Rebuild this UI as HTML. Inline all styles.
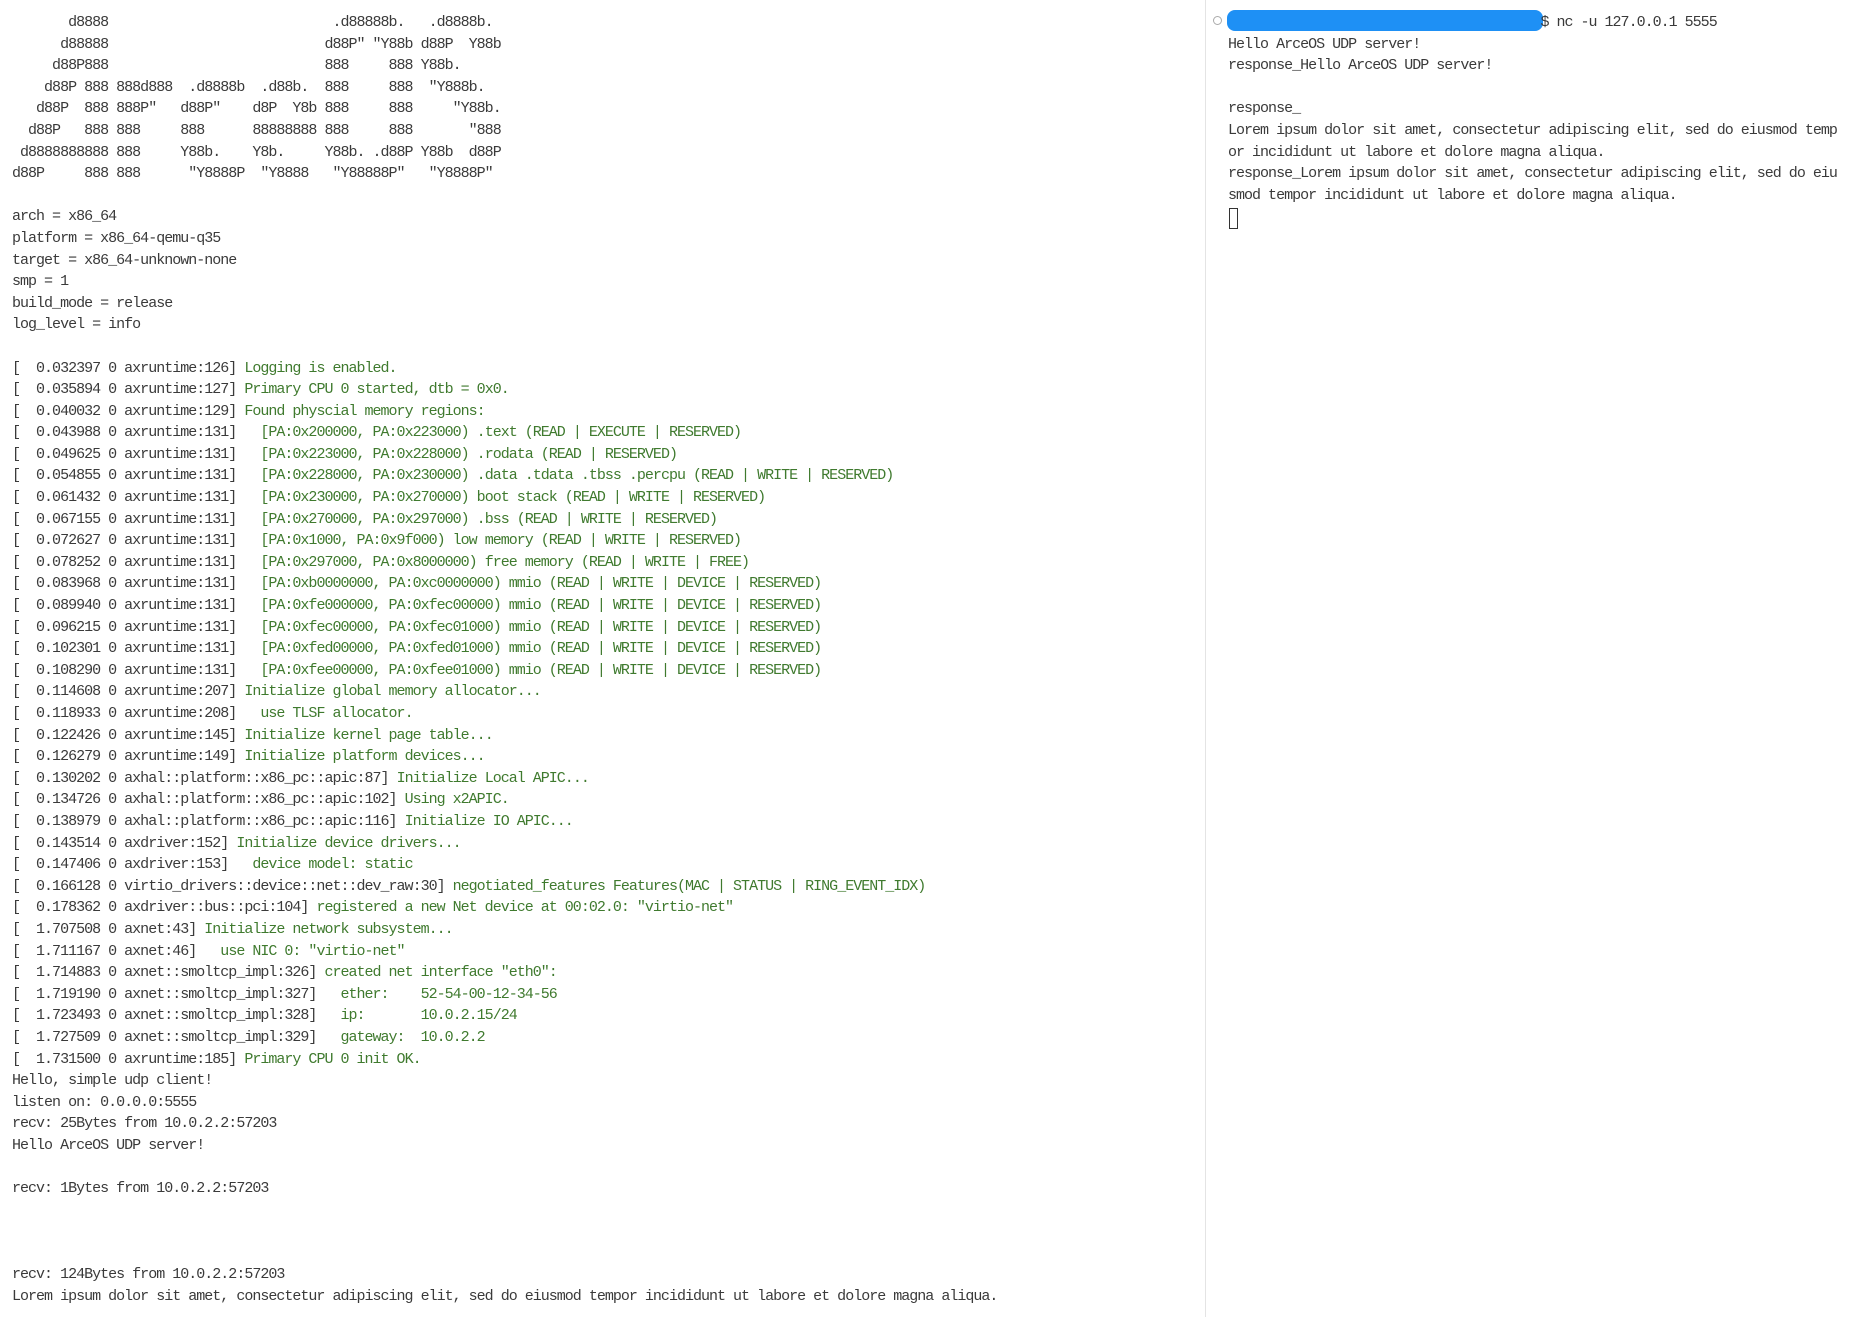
<!DOCTYPE html>
<html><head><meta charset="utf-8"><style>
html,body{margin:0;padding:0;background:#fff;width:1849px;height:1317px;overflow:hidden;}
pre{margin:0;font-family:"Liberation Mono",monospace;font-size:15px;letter-spacing:-0.99px;line-height:21.6px;color:#3a3a3a;white-space:pre;}
#left{position:absolute;left:12px;top:12px;}
#right{position:absolute;left:1228px;top:12px;}
.g{color:#3f7a2e;}
#div{position:absolute;left:1205px;top:0;width:1px;height:1317px;background:#e4e4e4;}
#circ{position:absolute;left:1213px;top:16px;width:7px;height:7px;border:1px solid #aaa;border-radius:50%;}
#bar{position:absolute;left:1227px;top:10px;width:316px;height:21px;background:#1e90f5;border-radius:8px;}
#cur{position:absolute;left:1229px;top:208px;width:7px;height:19px;border:1px solid #333;}
</style></head><body>
<div id="div"></div>
<pre id="left">       d8888                            .d88888b.   .d8888b.
      d88888                           d88P" "Y88b d88P  Y88b
     d88P888                           888     888 Y88b.
    d88P 888 888d888  .d8888b  .d88b.  888     888  "Y888b.
   d88P  888 888P"   d88P"    d8P  Y8b 888     888     "Y88b.
  d88P   888 888     888      88888888 888     888       "888
 d8888888888 888     Y88b.    Y8b.     Y88b. .d88P Y88b  d88P
d88P     888 888      "Y8888P  "Y8888   "Y88888P"   "Y8888P"

arch = x86_64
platform = x86_64-qemu-q35
target = x86_64-unknown-none
smp = 1
build_mode = release
log_level = info

[  0.032397 0 axruntime:126] <span class="g">Logging is enabled.</span>
[  0.035894 0 axruntime:127] <span class="g">Primary CPU 0 started, dtb = 0x0.</span>
[  0.040032 0 axruntime:129] <span class="g">Found physcial memory regions:</span>
[  0.043988 0 axruntime:131] <span class="g">  [PA:0x200000, PA:0x223000) .text (READ | EXECUTE | RESERVED)</span>
[  0.049625 0 axruntime:131] <span class="g">  [PA:0x223000, PA:0x228000) .rodata (READ | RESERVED)</span>
[  0.054855 0 axruntime:131] <span class="g">  [PA:0x228000, PA:0x230000) .data .tdata .tbss .percpu (READ | WRITE | RESERVED)</span>
[  0.061432 0 axruntime:131] <span class="g">  [PA:0x230000, PA:0x270000) boot stack (READ | WRITE | RESERVED)</span>
[  0.067155 0 axruntime:131] <span class="g">  [PA:0x270000, PA:0x297000) .bss (READ | WRITE | RESERVED)</span>
[  0.072627 0 axruntime:131] <span class="g">  [PA:0x1000, PA:0x9f000) low memory (READ | WRITE | RESERVED)</span>
[  0.078252 0 axruntime:131] <span class="g">  [PA:0x297000, PA:0x8000000) free memory (READ | WRITE | FREE)</span>
[  0.083968 0 axruntime:131] <span class="g">  [PA:0xb0000000, PA:0xc0000000) mmio (READ | WRITE | DEVICE | RESERVED)</span>
[  0.089940 0 axruntime:131] <span class="g">  [PA:0xfe000000, PA:0xfec00000) mmio (READ | WRITE | DEVICE | RESERVED)</span>
[  0.096215 0 axruntime:131] <span class="g">  [PA:0xfec00000, PA:0xfec01000) mmio (READ | WRITE | DEVICE | RESERVED)</span>
[  0.102301 0 axruntime:131] <span class="g">  [PA:0xfed00000, PA:0xfed01000) mmio (READ | WRITE | DEVICE | RESERVED)</span>
[  0.108290 0 axruntime:131] <span class="g">  [PA:0xfee00000, PA:0xfee01000) mmio (READ | WRITE | DEVICE | RESERVED)</span>
[  0.114608 0 axruntime:207] <span class="g">Initialize global memory allocator...</span>
[  0.118933 0 axruntime:208] <span class="g">  use TLSF allocator.</span>
[  0.122426 0 axruntime:145] <span class="g">Initialize kernel page table...</span>
[  0.126279 0 axruntime:149] <span class="g">Initialize platform devices...</span>
[  0.130202 0 axhal::platform::x86_pc::apic:87] <span class="g">Initialize Local APIC...</span>
[  0.134726 0 axhal::platform::x86_pc::apic:102] <span class="g">Using x2APIC.</span>
[  0.138979 0 axhal::platform::x86_pc::apic:116] <span class="g">Initialize IO APIC...</span>
[  0.143514 0 axdriver:152] <span class="g">Initialize device drivers...</span>
[  0.147406 0 axdriver:153] <span class="g">  device model: static</span>
[  0.166128 0 virtio_drivers::device::net::dev_raw:30] <span class="g">negotiated_features Features(MAC | STATUS | RING_EVENT_IDX)</span>
[  0.178362 0 axdriver::bus::pci:104] <span class="g">registered a new Net device at 00:02.0: "virtio-net"</span>
[  1.707508 0 axnet:43] <span class="g">Initialize network subsystem...</span>
[  1.711167 0 axnet:46] <span class="g">  use NIC 0: "virtio-net"</span>
[  1.714883 0 axnet::smoltcp_impl:326] <span class="g">created net interface "eth0":</span>
[  1.719190 0 axnet::smoltcp_impl:327] <span class="g">  ether:    52-54-00-12-34-56</span>
[  1.723493 0 axnet::smoltcp_impl:328] <span class="g">  ip:       10.0.2.15/24</span>
[  1.727509 0 axnet::smoltcp_impl:329] <span class="g">  gateway:  10.0.2.2</span>
[  1.731500 0 axruntime:185] <span class="g">Primary CPU 0 init OK.</span>
Hello, simple udp client!
listen on: 0.0.0.0:5555
recv: 25Bytes from 10.0.2.2:57203
Hello ArceOS UDP server!

recv: 1Bytes from 10.0.2.2:57203



recv: 124Bytes from 10.0.2.2:57203
Lorem ipsum dolor sit amet, consectetur adipiscing elit, sed do eiusmod tempor incididunt ut labore et dolore magna aliqua.</pre>
<div id="circ"></div>
<div id="bar"></div>
<pre id="right">                                       $ nc -u 127.0.0.1 5555
Hello ArceOS UDP server!
response_Hello ArceOS UDP server!

response_
Lorem ipsum dolor sit amet, consectetur adipiscing elit, sed do eiusmod temp
or incididunt ut labore et dolore magna aliqua.
response_Lorem ipsum dolor sit amet, consectetur adipiscing elit, sed do eiu
smod tempor incididunt ut labore et dolore magna aliqua.</pre>
<div id="cur"></div>
</body></html>
